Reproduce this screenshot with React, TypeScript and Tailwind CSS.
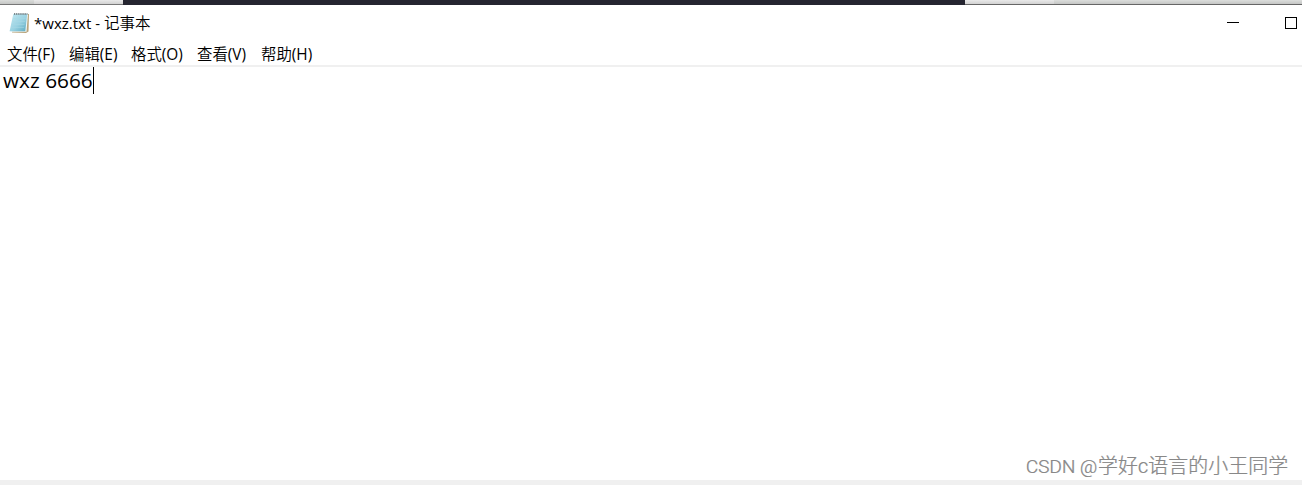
const menus = [
  { label: '文件', shortcut: '(F)', width: 'w-[48px]' },
  { label: '编辑', shortcut: '(E)', width: 'w-[48px]' },
  { label: '格式', shortcut: '(O)', width: 'w-[52px]' },
  { label: '查看', shortcut: '(V)', width: 'w-[50px]' },
  { label: '帮助', shortcut: '(H)', width: 'w-[52px]' },
];

function NotepadIcon() {
  return (
    <svg width="20" height="22" viewBox="0 0 20 22" className="shrink-0">
      <defs>
        <linearGradient id="page" x1="0" y1="0" x2="1" y2="1">
          <stop offset="0" stopColor="#c3e9f2" />
          <stop offset="0.55" stopColor="#9ad2e2" />
          <stop offset="1" stopColor="#5ba9c0" />
        </linearGradient>
      </defs>
      <path d="M5 2.5L20 2L19.500 19.500L17 21L3 20.5Z" fill="#b9a47c" />
      <path d="M4.500 2H19L17.500 19.800H1.500Z" fill="#eef8fa" />
      <path d="M4.300 2H18.200L16.300 19.200H0.600Z" fill="url(#page)" />
      <path d="M4 6.500h12.500M3.500 9.500h12.500M3 12.500h12.500M2.500 15.500h12.500" stroke="#a9d8e5" strokeWidth="0.500" />
      <path d="M5 2H18.500" stroke="#7d8b90" strokeWidth="2.200" strokeDasharray="1.300 0.800" />
    </svg>
  );
}

export default function App() {
  return (
    <div className="flex h-[485px] w-[1302px] flex-col overflow-hidden bg-white font-['Open_Sans','Noto_Sans_CJK_SC',sans-serif] text-black">
      {/* Strip of the windows behind */}
      <div className="flex h-[5px] shrink-0">
        <div className="w-[34px] border-b border-[#777] bg-gradient-to-b from-[#dadcda] to-[#c5c6c5]" />
        <div className="w-[89px] border-b border-[#777] bg-gradient-to-b from-[#e9e9e9] to-[#d2d2d2]" />
        <div className="w-[842px] bg-[#252530]" />
        <div className="w-[89px] border-b border-[#666] bg-gradient-to-b from-[#e9e9e9] to-[#d2d2d2]" />
        <div className="flex-1 border-b border-[#666] bg-gradient-to-b from-[#dcdedc] to-[#c5c6c5]" />
      </div>

      <header className="flex h-[36px] shrink-0 items-center justify-between pl-[9px] pr-[5px]">
        <div className="flex items-center gap-[5px]">
          <NotepadIcon />
          <h1 className="whitespace-nowrap text-[15px] leading-5">
            *wxz.txt - <span className="text-[15.5px] font-[350]">记事本</span>
          </h1>
        </div>
        <div className="flex items-center gap-[46px]">
          <div className="mb-px h-px w-3 bg-black" />
          <div className="size-3 border border-black" />
        </div>
      </header>

      <nav className="flex h-[26px] shrink-0 items-center gap-[14px] border-b-2 border-[#f0f0f0] pl-[7px] pt-[3px] text-[15.4px] leading-5">
        {menus.map((menu) => (
          <span key={menu.shortcut} className={`${menu.width} whitespace-nowrap`}>
            <span className="font-[350]">{menu.label}</span>
            {menu.shortcut}
          </span>
        ))}
      </nav>

      <main className="flex flex-1 flex-col justify-between">
        <div className="flex pl-[3px]">
          <span className="w-[90px] whitespace-nowrap text-[20.8px] leading-[27px]">wxz 6666</span>
          <span className="h-[27px] w-px bg-black" />
        </div>
        <div className="-mb-px flex items-baseline justify-end pr-[14px] text-[20px] font-light leading-[28px] text-[#888] [text-shadow:0.5px_0_0_#bbb]">
          <span className="w-[72px] whitespace-nowrap font-[Roboto,sans-serif] text-[19px]">CSDN @</span>
          <span className="whitespace-nowrap font-[Roboto,'Noto_Sans_CJK_SC',sans-serif]">学好c语言的小王同学</span>
        </div>
      </main>
      <footer className="h-[5px] shrink-0 bg-[#f0f0f0]" />
    </div>
  );
}
